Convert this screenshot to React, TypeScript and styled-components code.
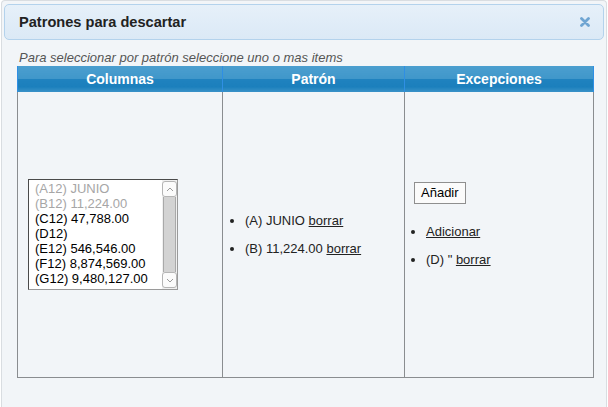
import styled, { createGlobalStyle } from "styled-components";

const GlobalStyle = createGlobalStyle`
  html, body {
    margin: 0;
    padding: 0;
    background: #ffffff;
    overflow: hidden;
  }
  body {
    font-family: "Liberation Sans", Arial, sans-serif;
    font-size: 13px;
    color: #222;
  }
`;

const Dialog = styled.div`
  box-sizing: border-box;
  margin-left: 1px;
  width: 606px;
  height: 407px;
  padding: 3px 2px;
  border: 1px solid #d9dde1;
  border-bottom: none;
  border-radius: 4px 4px 0 0;
  background: #f2f5f8;
`;

const TitleBar = styled.div`
  height: 34px;
  display: flex;
  align-items: center;
  justify-content: space-between;
  padding: 0 13px 0 14px;
  border: 1px solid #b3d2ec;
  border-radius: 5px;
  background: linear-gradient(#e6f0f9, #dbe9f6);
`;

const Title = styled.span`
  font-size: 14.6px;
  font-weight: bold;
  color: #222;
`;

const CloseButton = styled.span`
  display: flex;
  width: 10px;
  height: 10px;
  cursor: pointer;
`;

const Content = styled.div`
  padding: 0 11px 0 13px;
`;

const Hint = styled.p`
  margin: 10px 0 0 2px;
  font-style: italic;
  line-height: 16px;
  color: #555;
`;

const Grid = styled.table`
  width: 573px;
  border-collapse: collapse;
  table-layout: fixed;
`;

const HeadCell = styled.th<{ $w: number }>`
  width: ${(p) => p.$w}px;
  height: 26px;
  padding: 0;
  font-size: 14px;
  font-weight: bold;
  color: #fff;
  border-left: 1px solid #2f8fe4;
  border-right: 1px solid #2f8fe4;
  background: linear-gradient(
    #4b9ecf 0%,
    #4097ca 48%,
    #1f82bf 52%,
    #1b7fbc 80%,
    #3a92c8 100%
  );
`;

const BodyCell = styled.td<{ $pad?: number }>`
  height: 285px;
  padding: 0 ${(p) => p.$pad ?? 10}px;
  vertical-align: middle;
  border: 1px solid #8a8d90;
  border-top: none;
`;

const ListBox = styled.div`
  width: 148px;
  height: 109px;
  display: flex;
  border: 1px solid #4a4a4a;
  border-right-color: #9a9a9a;
  border-bottom-color: #9a9a9a;
  background: #fff;
  box-sizing: content-box;
`;

const Options = styled.div`
  flex: 1;
  padding: 1px 0 0 6px;
  overflow: hidden;
`;

const Option = styled.div<{ $disabled?: boolean }>`
  line-height: 15px;
  white-space: nowrap;
  color: ${(p) => (p.$disabled ? "#a6a6a6" : "#000")};
`;

const ScrollBar = styled.div`
  width: 15px;
  display: flex;
  flex-direction: column;
  padding: 1px 0;
  background: #f0f0f0;
`;

const ScrollArrow = styled.div`
  height: 14px;
  display: flex;
  align-items: center;
  justify-content: center;
  border: 1px solid #b5b5b5;
  border-radius: 3px;
  background: #fbfbfb;
`;

const ScrollThumb = styled.div`
  flex: 1;
  margin: 0 1px;
  border: 1px solid #a9a9a9;
  border-top: none;
  border-bottom: none;
  background: #d3d3d3;
`;

const BulletList = styled.ul`
  margin: 20px 0;
  padding-left: 12px;
  list-style: disc;

  li {
    line-height: 16px;
  }
  li + li {
    margin-top: 12px;
  }
`;

const Link = styled.a`
  color: #222;
  text-decoration: underline;
  cursor: pointer;
`;

const AddButton = styled.button`
  height: 22px;
  padding: 0 6px;
  font-family: "Liberation Sans", Arial, sans-serif;
  font-size: 13px;
  color: #000;
  background: #fbfbfb;
  border: 1px solid #8f8f8f;
  border-radius: 0;
`;

const Arrow = ({ up }: { up?: boolean }) => (
  <svg width="8" height="5" viewBox="0 0 8 5">
    <path
      d={up ? "M1 4 L4 1 L7 4" : "M1 1 L4 4 L7 1"}
      fill="none"
      stroke="#9a9a9a"
      strokeWidth="1"
    />
  </svg>
);

const options = [
  { label: "(A12) JUNIO", disabled: true },
  { label: "(B12) 11,224.00", disabled: true },
  { label: "(C12) 47,788.00" },
  { label: "(D12)" },
  { label: "(E12) 546,546.00" },
  { label: "(F12) 8,874,569.00" },
  { label: "(G12) 9,480,127.00" },
];

const patterns = ["(A) JUNIO", "(B) 11,224.00"];

export default function App() {
  return (
    <>
      <GlobalStyle />
      <Dialog>
        <TitleBar>
          <Title>Patrones para descartar</Title>
          <CloseButton>
            <svg width="10" height="10" viewBox="0 0 10 10">
              <path
                d="M1.5 1.5 L8.5 8.5 M8.5 1.5 L1.5 8.5"
                stroke="#6fa5d2"
                strokeWidth="2.8"
                strokeLinecap="round"
              />
            </svg>
          </CloseButton>
        </TitleBar>
        <Content>
          <Hint>Para seleccionar por patrón seleccione uno o mas items</Hint>
          <Grid>
            <thead>
              <tr>
                <HeadCell $w={204}>Columnas</HeadCell>
                <HeadCell $w={181}>Patrón</HeadCell>
                <HeadCell $w={188}>Excepciones</HeadCell>
              </tr>
            </thead>
            <tbody>
              <tr>
                <BodyCell>
                  <ListBox>
                    <Options>
                      {options.map((o) => (
                        <Option key={o.label} $disabled={o.disabled}>
                          {o.label}
                        </Option>
                      ))}
                    </Options>
                    <ScrollBar>
                      <ScrollArrow>
                        <Arrow up />
                      </ScrollArrow>
                      <ScrollThumb />
                      <ScrollArrow>
                        <Arrow />
                      </ScrollArrow>
                    </ScrollBar>
                  </ListBox>
                </BodyCell>
                <BodyCell>
                  <BulletList>
                    {patterns.map((p) => (
                      <li key={p}>
                        {p} <Link>borrar</Link>
                      </li>
                    ))}
                  </BulletList>
                </BodyCell>
                <BodyCell $pad={9}>
                  <AddButton>Añadir</AddButton>
                  <BulletList>
                    <li>
                      <Link>Adicionar</Link>
                    </li>
                    <li>
                      (D) " <Link>borrar</Link>
                    </li>
                  </BulletList>
                </BodyCell>
              </tr>
            </tbody>
          </Grid>
        </Content>
      </Dialog>
    </>
  );
}
